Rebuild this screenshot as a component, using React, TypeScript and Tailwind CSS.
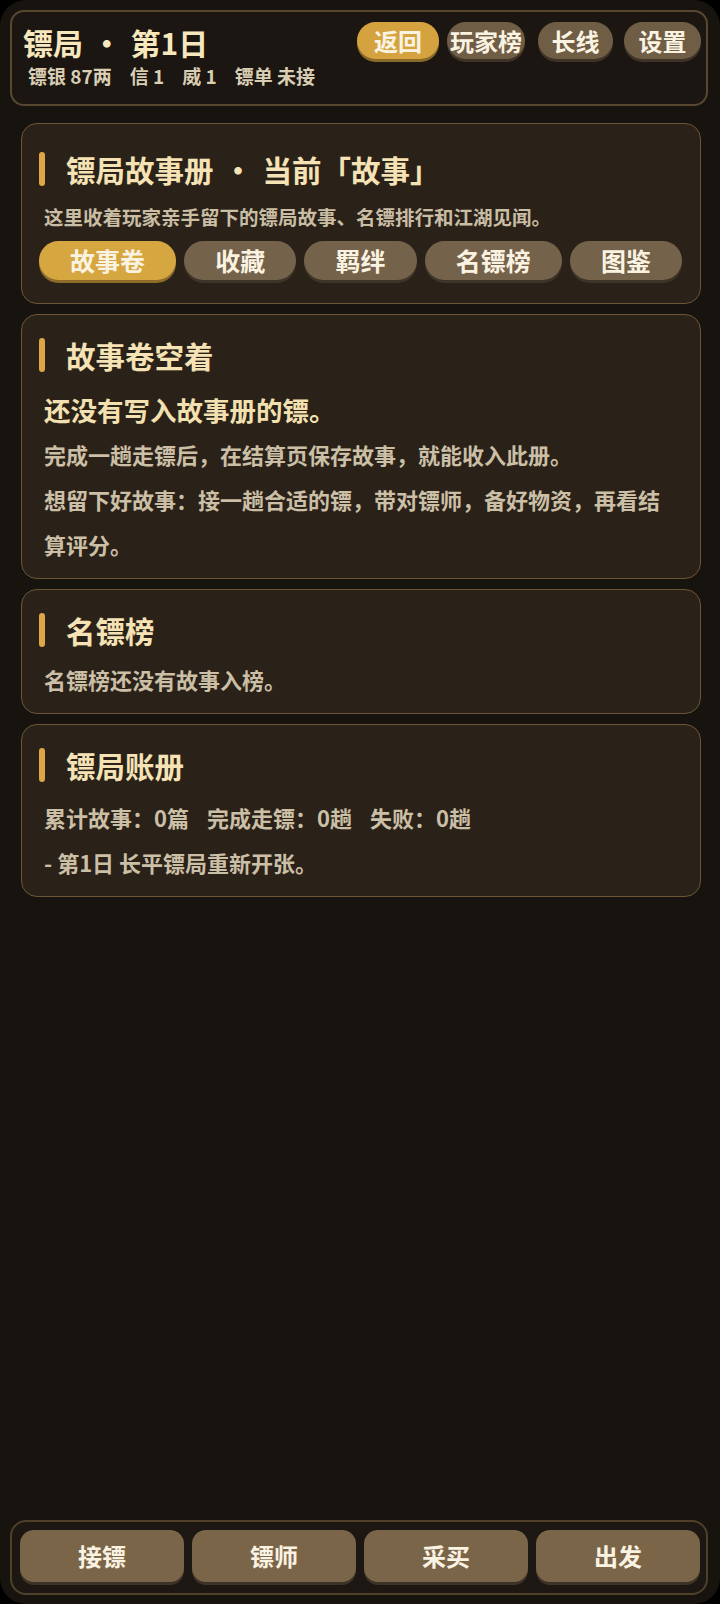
import React from 'react';

const FONT = { fontFamily: '"Noto Sans CJK SC", "Noto Sans", sans-serif' };

const topButtons = [
  { label: '返回', active: true, cls: 'w-[82px]' },
  { label: '玩家榜', active: false, cls: 'w-[78px] ml-[8px]' },
  { label: '长线', active: false, cls: 'w-[75px] ml-[13px]' },
  { label: '设置', active: false, cls: 'w-[77px] ml-[11px]' },
];

const tabs = ['故事卷', '收藏', '羁绊', '名镖榜', '图鉴'];

const navItems = ['接镖', '镖师', '采买', '出发'];

function CardTitle({ children }: { children: React.ReactNode }) {
  return (
    <div className="flex items-center h-[46px]">
      <span className="w-[6px] h-[34px] rounded-full bg-[#dea646]" />
      <h2 className="ml-[21px] text-[29.5px] font-bold text-[#f5e3b5] leading-[46px] whitespace-nowrap">
        {children}
      </h2>
    </div>
  );
}

function Card({ children, top = 'pt-[17px]', bottom = 'pb-[11px]' }: { children: React.ReactNode; top?: string; bottom?: string }) {
  return (
    <section
      className={`ml-[21px] mr-[19px] rounded-[16px] border-[1.5px] border-[#6d5635] bg-[#2a2219] pl-[17px] pr-[18px] ${top} ${bottom}`}
    >
      {children}
    </section>
  );
}

export default function App() {
  return (
    <div className="min-h-screen bg-black" style={FONT}>
      <div className="h-[1604px] rounded-[26px] bg-[#17130e] flex flex-col pt-[10px]">
        {/* header */}
        <header className="ml-[10px] mr-[12px] h-[96px] rounded-[14px] border-2 border-[#594830] bg-[#1b1611] flex justify-between pl-[11px] pr-[5px]">
          <div className="pt-[10px]">
            <div className="text-[30px] font-bold leading-[40px] text-[#f6e7bd] whitespace-nowrap">
              镖局 <span className="inline-block mx-[2px]">・</span> 第1日
            </div>
            <div className="mt-[3px] flex gap-[18px] pl-[5px] text-[19px] font-bold leading-[22px] text-[#d9cdb3] whitespace-nowrap">
              <span>镖银 87两</span>
              <span>信 1</span>
              <span>威 1</span>
              <span>镖单 未接</span>
            </div>
          </div>
          <div className="flex items-start pt-[10px]">
            {topButtons.map(b => (
              <button
                key={b.label}
                className={`${b.cls} h-[37px] rounded-full text-[24px] font-bold leading-none whitespace-nowrap text-[#fbf3e2] ${
                  b.active
                    ? 'bg-[#d4a33f] shadow-[0_3px_0_#8a6a28]'
                    : 'bg-[#6f5d45] shadow-[0_3px_0_#3e3326]'
                }`}
              >
                {b.label}
              </button>
            ))}
          </div>
        </header>

        <div className="mt-[17px] flex flex-col gap-[10px]">
          {/* story book header */}
          <Card top="pt-[22px]" bottom="pb-[23px]">
            <CardTitle>
              镖局故事册 <span className="inline-block mx-[3px]">・</span> 当前「故事」
            </CardTitle>
            <p className="mt-[11px] pl-[5px] text-[19.5px] font-bold leading-[28px] text-[#c9bda4] whitespace-nowrap">
              这里收着玩家亲手留下的镖局故事、名镖排行和江湖见闻。
            </p>
            <div className="mt-[10px] flex gap-[8px]">
              {tabs.map((t, i) => (
                <button
                  key={t}
                  className={`flex-auto h-[39px] px-[20px] rounded-full text-[25px] font-bold leading-none whitespace-nowrap text-[#fbf3e2] ${
                    i === 0
                      ? 'bg-[#d6a640] shadow-[0_3px_0_#8d6c2a]'
                      : 'bg-[#75624a] shadow-[0_3px_0_#3f3428]'
                  }`}
                >
                  {t}
                </button>
              ))}
            </div>
          </Card>

          {/* empty state */}
          <Card>
            <CardTitle>故事卷空着</CardTitle>
            <div className="pl-[5px] pr-[20px]">
              <p className="mt-[9px] text-[26.5px] font-bold leading-[45px] text-[#f3e0b0]">
                还没有写入故事册的镖。
              </p>
              <p className="text-[22px] font-bold leading-[45px] text-[#cbbfa6]">
                完成一趟走镖后，在结算页保存故事，就能收入此册。
              </p>
              <p className="text-[22px] font-bold leading-[45px] text-[#cbbfa6]">
                想留下好故事：接一趟合适的镖，带对镖师，备好物资，再看结算评分。
              </p>
            </div>
          </Card>

          {/* ranking */}
          <Card>
            <CardTitle>名镖榜</CardTitle>
            <p className="mt-[4px] pl-[5px] text-[22px] font-bold leading-[45px] text-[#cbbfa6]">
              名镖榜还没有故事入榜。
            </p>
          </Card>

          {/* ledger */}
          <Card>
            <CardTitle>镖局账册</CardTitle>
            <div className="mt-[7px] pl-[5px] text-[22px] font-bold leading-[45px] text-[#cbbfa6]">
              <p className="flex gap-[18px] whitespace-nowrap">
                <span>累计故事：0篇</span>
                <span>完成走镖：0趟</span>
                <span>失败：0趟</span>
              </p>
              <p>- 第1日 长平镖局重新开张。</p>
            </div>
          </Card>
        </div>

        {/* bottom nav */}
        <nav className="mt-auto mb-[9px] ml-[10px] mr-[12px] rounded-[16px] border-2 border-[#4f4029] bg-[#1c1712] pl-[8px] pr-[6px] pt-[8px] pb-[11px] grid grid-cols-4 gap-[8px]">
          {navItems.map(n => (
            <button
              key={n}
              className="h-[52px] rounded-[14px] bg-[#7a6549] shadow-[0_3px_0_#3d3226] text-[24px] font-bold text-[#fbf3e2]"
            >
              {n}
            </button>
          ))}
        </nav>
      </div>
    </div>
  );
}
